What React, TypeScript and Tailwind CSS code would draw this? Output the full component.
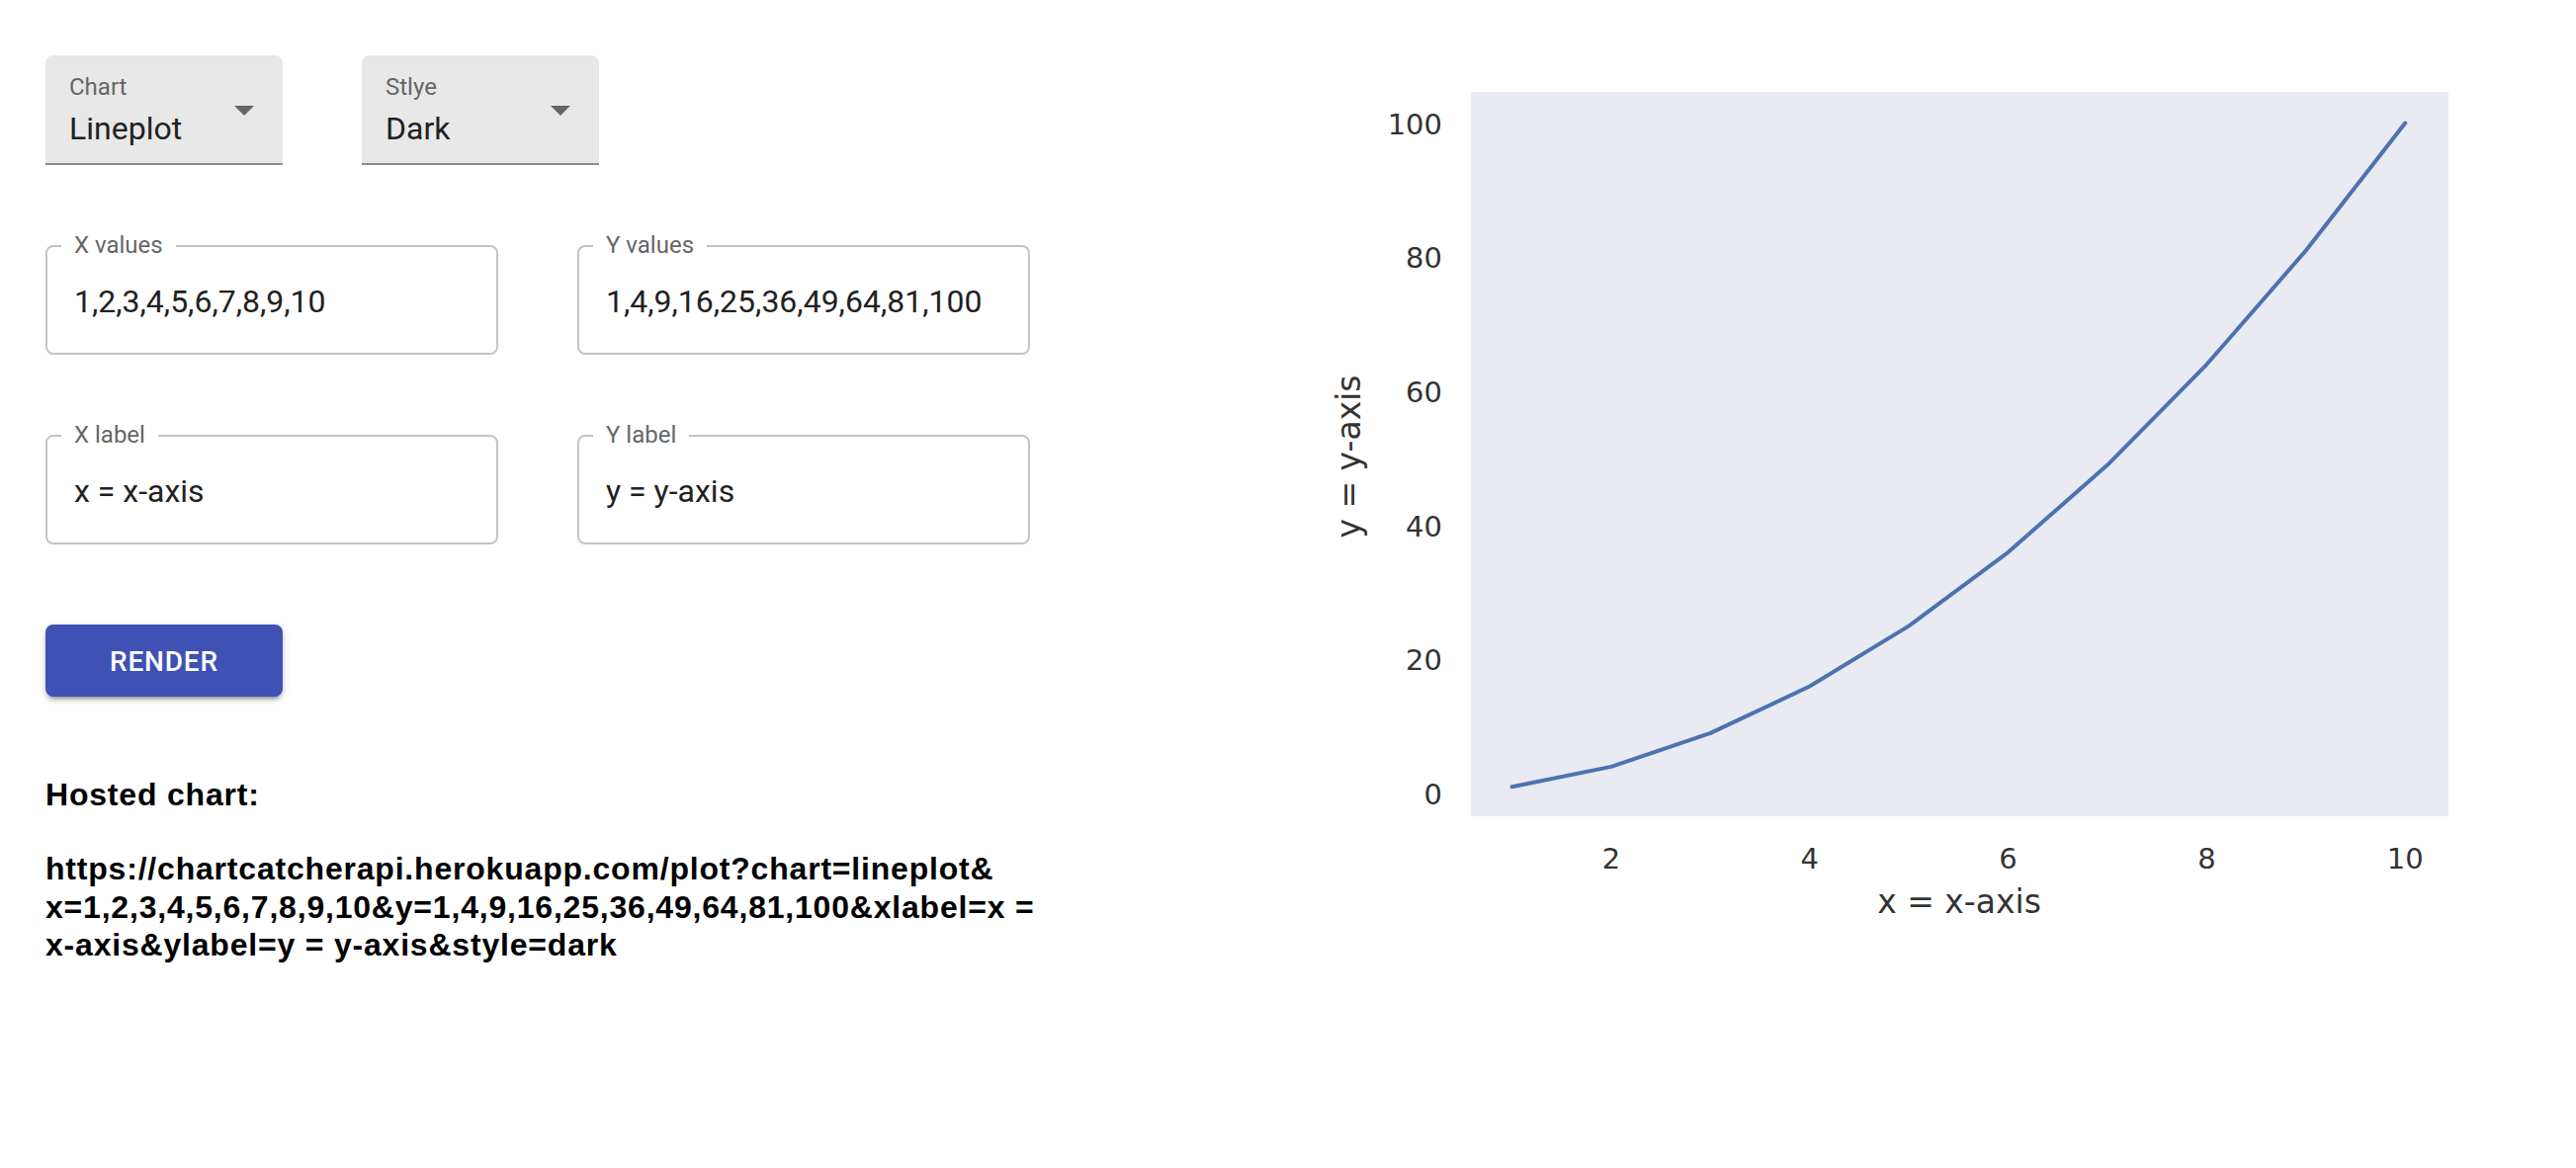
import React from "react";

const roboto = { fontFamily: "Roboto, 'Noto Sans', sans-serif" };

function SelectBox({ label, value }: { label: string; value: string }) {
  return (
    <div className="flex h-[111px] w-[240px] items-center rounded-t-[8px] border-b-2 border-[#8c8c8c] bg-[#e8e8e8]">
      <div className="flex flex-1 flex-col self-stretch pl-[24px] pt-[18px]">
        <span className="text-[24px] leading-[28px] text-[#666666]">{label}</span>
        <span className="mt-[9px] text-[32px] leading-[38px] text-[#212121]">{value}</span>
      </div>
      <svg width="20" height="10" viewBox="0 0 20 10" className="mr-[29px] mt-[2px]">
        <path d="M0 0 L10 10 L20 0 Z" fill="#666666" />
      </svg>
    </div>
  );
}

function Field({ label, value }: { label: string; value: string }) {
  return (
    <div className="relative flex h-[111px] w-[458px] items-center rounded-[8px] border-2 border-[#c4c4c4] pl-[27px] pt-[2px]">
      <span className="absolute -top-[16px] left-[14px] bg-white px-[13px] text-[24px] leading-[28px] text-[#666666]">
        {label}
      </span>
      <span className="text-[32px] leading-[38px] text-[#212121]">{value}</span>
    </div>
  );
}

function Chart() {
  const xs = [1, 2, 3, 4, 5, 6, 7, 8, 9, 10];
  const X = (v: number) => 1529.6 + (v - 1) * 100.4;
  const Y = (v: number) => 803 - v * 6.784;
  const pts = xs.map((x) => `${X(x).toFixed(1)},${Y(x * x).toFixed(1)}`).join(" ");
  const font = "'DejaVu Sans', sans-serif";
  return (
    <svg width="1200" height="920" viewBox="1330 60 1200 920" className="block">
      <rect x="1488" y="93" width="989" height="733" fill="#EAEAF2" />
      <polyline points={pts} fill="none" stroke="#4C72B0" strokeWidth="4" strokeLinejoin="round" strokeLinecap="round" />
      {[0, 20, 40, 60, 80, 100].map((t) => (
        <text key={t} x="1459" y={Y(t) + 11} textAnchor="end" fontSize="29" fill="#333333" fontFamily={font}>
          {t}
        </text>
      ))}
      {[2, 4, 6, 8, 10].map((t) => (
        <text key={t} x={X(t)} y="879" textAnchor="middle" fontSize="29" fill="#333333" fontFamily={font}>
          {t}
        </text>
      ))}
      <text x="1982" y="924" textAnchor="middle" fontSize="33" fill="#333333" fontFamily={font}>
        x = x-axis
      </text>
      <text
        transform="translate(1376,462) rotate(-90)"
        textAnchor="middle"
        fontSize="33"
        fill="#333333"
        fontFamily={font}
      >
        y = y-axis
      </text>
    </svg>
  );
}

export default function App() {
  return (
    <div className="flex min-h-[1182px] w-[2606px] bg-white">
      <div className="w-[1330px] shrink-0 pl-[46px] pt-[56px]" style={roboto}>
        <div className="flex gap-[80px]">
          <SelectBox label="Chart" value="Lineplot" />
          <SelectBox label="Stlye" value="Dark" />
        </div>
        <div className="mt-[81px] flex gap-[80px]">
          <Field label="X values" value="1,2,3,4,5,6,7,8,9,10" />
          <Field label="Y values" value="1,4,9,16,25,36,49,64,81,100" />
        </div>
        <div className="mt-[81px] flex gap-[80px]">
          <Field label="X label" value="x = x-axis" />
          <Field label="Y label" value="y = y-axis" />
        </div>
        <button className="mt-[81px] flex h-[73px] w-[240px] items-center justify-center rounded-[8px] bg-[#3f51b5] pt-[2px] text-[28px] font-medium uppercase tracking-[0.8px] text-white shadow-[0_6px_2px_-4px_rgba(0,0,0,0.2),0_4px_4px_0_rgba(0,0,0,0.14),0_2px_10px_0_rgba(0,0,0,0.12)]">
          Render
        </button>
        <div className="font-bold tracking-[0.8px] text-black" style={{ fontFamily: "'Liberation Sans', Arial, sans-serif" }}>
          <p className="mt-[80px] text-[32px] leading-[38px]">Hosted chart:</p>
          <p className="mt-[37px] text-[32px] leading-[38.5px]">
            <span className="block">https://chartcatcherapi.herokuapp.com/plot?chart=lineplot&amp;</span>
            <span className="block">x=1,2,3,4,5,6,7,8,9,10&amp;y=1,4,9,16,25,36,49,64,81,100&amp;xlabel=x =</span>
            <span className="block">x-axis&amp;ylabel=y = y-axis&amp;style=dark</span>
          </p>
        </div>
      </div>
      <div className="mt-[60px]">
        <Chart />
      </div>
    </div>
  );
}
